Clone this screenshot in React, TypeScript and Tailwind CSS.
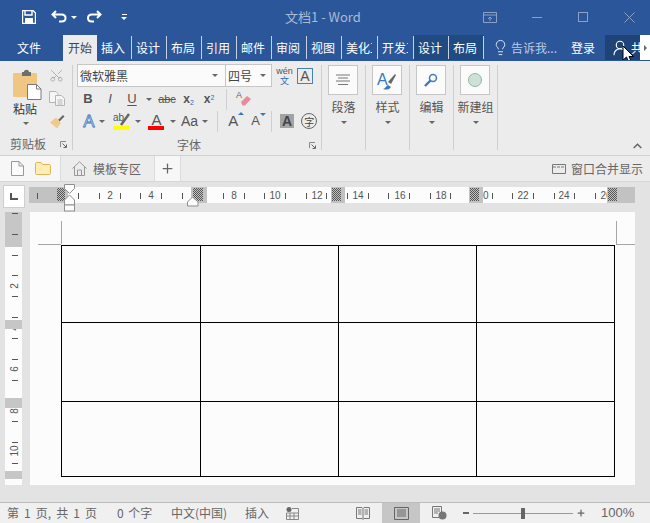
import { Scissors, Lightbulb, UserRound, Plus } from 'lucide-react'

const cjk = { fontFamily: '"Noto Sans CJK SC", "Liberation Sans", sans-serif' }

function Caret({ className = '' }: { className?: string }) {
  return <div className={`w-0 h-0 border-x-[3px] border-t-[3px] border-x-transparent border-t-[#666] ${className}`} />
}

function Launcher() {
  return (
    <svg width="7" height="7" viewBox="0 0 7 7">
      <path d="M0.5 6V0.5H6" fill="none" stroke="#888" />
      <path d="M2.5 2.5L6 6M6.5 3.5V6.5H3.5" fill="none" stroke="#666" />
    </svg>
  )
}

function Tab({ label, dark, wide }: { label: string; dark?: boolean; wide?: boolean }) {
  return (
    <div className={`h-[25px] flex items-center ${dark ? 'bg-[#1f4a82]' : ''}`}>
      <div className={`${wide ? 'w-[36px]' : 'w-[35px]'} h-[23px] border-r border-[#c5d2e6] pl-[4px] leading-[23px]`}>
        <div className="w-[26px] overflow-hidden whitespace-nowrap">{label}</div>
      </div>
    </div>
  )
}

function TitleBar() {
  return (
    <div className="h-[34px] flex items-center text-white relative">
      <svg className="ml-[22px]" width="14" height="14" viewBox="0 0 14 14">
        <path d="M0.5 0.5H11L13.5 3V13.5H0.5Z" fill="none" stroke="#fff" strokeWidth="1.4" />
        <path d="M3 1V5H10V1" fill="none" stroke="#fff" strokeWidth="1.4" />
        <rect x="3" y="8" width="8" height="5.5" fill="#fff" />
      </svg>
      <svg className="ml-[15px]" width="16" height="14" viewBox="0 0 16 14">
        <path d="M5 1L1.5 4.5L5 8M2 4.5H10.5C13 4.5 14.5 6 14.5 8C14.5 10 13 11.5 10.5 11.5H8" fill="none" stroke="#fff" strokeWidth="2" />
      </svg>
      <Caret className="ml-[4px] border-t-white" />
      <svg className="ml-[10px]" width="15" height="14" viewBox="0 0 15 14">
        <path d="M10 1L13.5 4.5L10 8M13 4.5H5C2.5 4.5 1 6 1 8C1 10 2.5 11.5 5 11.5H7" fill="none" stroke="#fff" strokeWidth="2" />
      </svg>
      <div className="ml-[19px] flex flex-col items-center gap-[2px]">
        <div className="w-[5px] h-px bg-white" />
        <Caret className="border-t-white" />
      </div>
      <div className="ml-[158px] text-[13px] text-[#a8bad6] whitespace-nowrap" style={cjk}>文档1 - Word</div>
      <svg className="ml-[122px]" width="14" height="11" viewBox="0 0 14 11">
        <path d="M0.5 0.5H13.5V10.5H0.5ZM0.5 3H13.5M7 9V5M5 7L7 5L9 7" fill="none" stroke="#8ba2c6" />
      </svg>
      <div className="ml-[35px] w-[10px] h-px bg-[#8ba2c6]" />
      <div className="ml-[36px] w-[10px] h-[10px] border border-[#8ba2c6]" />
      <svg className="ml-[36px]" width="11" height="11" viewBox="0 0 11 11">
        <path d="M0.5 0.5L10.5 10.5M10.5 0.5L0.5 10.5" stroke="#8ba2c6" />
      </svg>
    </div>
  )
}

function TabBar() {
  return (
    <div className="h-[27px] flex items-start text-[12px] text-white pt-px" style={cjk}>
      <div className="w-[63px] h-[26px] pl-[17px] leading-[25px]">文件</div>
      <div className="w-[34px] h-[26px] bg-[#ececec] text-[#444] text-center leading-[25px]">开始</div>
      <Tab label="插入" />
      <Tab label="设计" />
      <Tab label="布局" />
      <Tab label="引用" />
      <Tab label="邮件" />
      <Tab label="审阅" />
      <Tab label="视图" />
      <Tab label="美化工具" wide />
      <Tab label="开发工具" wide />
      <Tab label="设计" dark />
      <Tab label="布局" dark />
      <Lightbulb className="ml-[8px] mt-[4px] shrink-0" size={17} strokeWidth={1.3} color="#e8edf5" />
      <div className="ml-[2px] w-[52px] text-[#bccbe2] leading-[25px] whitespace-nowrap">告诉我...</div>
      <div className="ml-[8px] w-[32px] leading-[25px]">登录</div>
      <div className="ml-[2px] w-[35px] h-[25px] bg-[#1e4376] flex items-center pl-[6px] overflow-hidden relative whitespace-nowrap">
        <UserRound className="shrink-0" size={18} strokeWidth={1.5} />
        <span className="ml-[2px]">共享</span>
        <svg className="absolute left-[17px] top-[10px]" width="14" height="20" viewBox="0 0 14 20">
          <path d="M1 1V15L4.5 12L7 18L9.5 17L7 11.5H11.5Z" fill="#fff" stroke="#000" />
        </svg>
      </div>
      <div className="w-[10px] h-[25px] bg-white flex items-center justify-center">
        <div className="w-0 h-0 border-y-[3px] border-l-[3px] border-y-transparent border-l-[#666]" />
      </div>
    </div>
  )
}

function Sep() {
  return <div className="w-px h-[85px] mt-[4px] bg-[#cfcfcf] shrink-0" />
}

function ClipboardGroup() {
  return (
    <div className="w-[72px] shrink-0 flex flex-col">
      <div className="h-[75px] flex">
        <div className="w-[49px] pl-[13px] pt-[8px]">
          <svg width="29" height="31" viewBox="0 0 29 31">
            <rect x="0" y="4" width="24" height="24" rx="1" fill="#efc783" />
            <path d="M9 3H11C11 0 16 0 16 3H18V7H9Z" fill="#6e6e6e" />
            <path d="M14.5 15.5H23.5L28 20V30.5H14.5Z" fill="#fff" stroke="#7a7a7a" />
            <path d="M23.5 15.5V20H28" fill="none" stroke="#7a7a7a" />
          </svg>
          <div className="text-[12px] leading-[16px] text-[#333] mt-[1px]" style={cjk}>粘贴</div>
          <Caret className="ml-[10px] mt-[5px]" />
        </div>
        <div className="pt-[7px] flex flex-col">
          <Scissors size={15} strokeWidth={1.4} color="#a9a9a9" className="-rotate-90" />
          <svg className="mt-[8px]" width="16" height="15" viewBox="0 0 16 15">
            <path d="M0.5 0.5H7L9 2.5V11.5H0.5Z" fill="#f5f5f5" stroke="#b5b5b5" />
            <path d="M6.5 4.5H12.5L15.5 7.5V14.5H6.5Z" fill="#f5f5f5" stroke="#b5b5b5" />
            <path d="M8.5 9H13.5M8.5 11H13.5M8.5 13H13.5" stroke="#b5b5b5" />
          </svg>
          <svg className="mt-[8px]" width="16" height="15" viewBox="0 0 16 15">
            <path d="M9 6L14 1L15.5 2.5L10.5 7.5Z" fill="#666" />
            <path d="M7 3.5L12 9L8 14.5L1 8.5Z" fill="#eecb8d" />
          </svg>
        </div>
      </div>
      <div className="h-[16px] flex items-center justify-between pl-[10px] pr-[5px] text-[12px] text-[#666]" style={cjk}>
        <span>剪贴板</span>
        <Launcher />
      </div>
    </div>
  )
}

function FontGroup() {
  return (
    <div className="w-[248px] shrink-0 pl-[4px] flex flex-col">
      <div className="mt-[3px] h-[23px] flex items-center">
        <div className="w-[195px] h-[23px] border border-[#c6c6c6] bg-[#fbfbfb] flex text-[12px] text-[#444]" style={cjk}>
          <div className="w-[148px] border-r border-[#c6c6c6] flex items-center justify-between pl-[2px] pr-[7px]">
            <span>微软雅黑</span>
            <Caret />
          </div>
          <div className="flex-1 flex items-center justify-between pl-[2px] pr-[5px]">
            <span>四号</span>
            <Caret />
          </div>
        </div>
        <div className="ml-[4px] w-[17px] flex flex-col items-center text-[#555]" style={cjk}>
          <span className="text-[9px] leading-[9px]" style={{ fontFamily: '"Liberation Sans", sans-serif' }}>wén</span>
          <span className="text-[#2f6cb4] text-[9px] leading-[9px]">文</span>
        </div>
        <div className="ml-[4px] w-[16px] h-[16px] border border-[#4a7fb8] flex items-center justify-center text-[14px] leading-none text-[#555] font-['Liberation_Sans',sans-serif]">A</div>
      </div>
      <div className="h-[24px] flex items-center text-[#555] font-['Liberation_Sans',sans-serif]">
        <div className="w-[22px] text-center font-bold text-[13px]">B</div>
        <div className="w-[22px] text-center italic text-[13px]">I</div>
        <div className="w-[22px] text-center text-[13px] underline underline-offset-2">U</div>
        <div className="w-[12px] flex justify-center"><Caret /></div>
        <div className="w-[24px] text-center text-[11px] line-through">abc</div>
        <div className="w-[19px] text-center font-bold text-[12px]">x<sub className="text-[7px] font-normal text-[#2f6cb4]">2</sub></div>
        <div className="w-[22px] text-center font-bold text-[12px]">x<sup className="text-[7px] font-normal text-[#2f6cb4]">2</sup></div>
        <div className="ml-[6px] w-px h-[21px] bg-[#cfcfcf]" />
        <svg className="ml-[9px]" width="16" height="18" viewBox="0 0 16 18">
          <text x="0" y="8" className="fill-[#666] text-[9px]" style={{ fontFamily: '"Liberation Sans", sans-serif' }}>A</text>
          <path d="M5 12L11 6L15 9L9 15.5H6.5Z" fill="#ea8a9a" />
        </svg>
      </div>
      <div className="h-[20px] flex items-center text-[#555] font-['Liberation_Sans',sans-serif]">
        <svg className="ml-[4px]" width="16" height="16" viewBox="0 0 16 16">
          <text x="8" y="14" textAnchor="middle" className="fill-white stroke-[#3b78bd] text-[17px]" strokeWidth="0.8" style={{ fontFamily: '"Liberation Sans", sans-serif' }}>A</text>
        </svg>
        <Caret className="ml-[2px]" />
        <div className="ml-[8px] w-[17px] h-[17px] relative overflow-hidden">
          <span className="absolute left-0 top-[-3px] text-[10px]">ab</span>
          <svg className="absolute left-[6px] top-0" width="11" height="13" viewBox="0 0 11 13">
            <path d="M2 12L10 1" stroke="#666" strokeWidth="2.5" />
          </svg>
          <div className="absolute left-0 bottom-0 w-[16px] h-[4px] bg-[#ffff00]" />
        </div>
        <Caret className="ml-[5px]" />
        <div className="ml-[7px] w-[17px] h-[17px] relative">
          <span className="absolute inset-x-0 top-[-2px] text-center text-[15px] leading-[17px]">A</span>
          <div className="absolute left-0 bottom-0 w-[16px] h-[4px] bg-[#ff0000]" />
        </div>
        <Caret className="ml-[5px]" />
        <div className="ml-[5px] text-[14px]">Aa</div>
        <Caret className="ml-[4px]" />
        <div className="ml-[9px] w-px h-[21px] bg-[#cfcfcf]" />
        <div className="ml-[10px] w-[16px] text-[15px] relative">
          A
          <div className="absolute right-0 top-[2px] w-0 h-0 border-x-[3px] border-b-[3px] border-x-transparent border-b-[#3b78bd]" />
        </div>
        <div className="ml-[7px] w-[14px] text-[13px] relative">
          A
          <div className="absolute right-[-1px] top-[2px] w-0 h-0 border-x-[3px] border-t-[3px] border-x-transparent border-t-[#3b78bd]" />
        </div>
        <div className="ml-[6px] w-px h-[21px] bg-[#cfcfcf]" />
        <div className="ml-[8px] w-[14px] h-[14px] bg-[#a3a3a3] flex items-center justify-center text-[14px] font-bold text-[#444]">A</div>
        <div className="ml-[7px] w-[16px] h-[16px] rounded-full border border-[#666] flex items-center justify-center text-[10px] text-[#444]" style={cjk}>字</div>
      </div>
      <div className="mt-[6px] h-[16px] flex items-center text-[12px] text-[#666]" style={cjk}>
        <span className="ml-[100px]">字体</span>
        <div className="ml-[108px]"><Launcher /></div>
      </div>
    </div>
  )
}

function BigButton({ label, wide, children }: { label: string; wide?: boolean; children: React.ReactNode }) {
  return (
    <div className="w-[43px] shrink-0 pt-[4px] flex flex-col items-center text-[12px] text-[#555]" style={cjk}>
      <div className="self-start ml-[6px] w-[30px] h-[30px] border border-[#c6c6c6] bg-[#fbfbfb] flex items-center justify-center">{children}</div>
      <div className={`mt-[4px] leading-[16px] whitespace-nowrap ${wide ? '-mx-2' : ''}`}>{label}</div>
      <Caret className="mt-[6px]" />
    </div>
  )
}

function Ribbon() {
  return (
    <div className="h-[95px] bg-[#ececec] border-b border-[#d2d2d2] flex">
      <ClipboardGroup />
      <Sep />
      <FontGroup />
      <Sep />
      <BigButton label="段落">
        <svg width="16" height="12" viewBox="0 0 16 12">
          <path d="M1 1H15M3 4H13M1 7H15M3 10.5H13" stroke="#777" />
        </svg>
      </BigButton>
      <Sep />
      <BigButton label="样式">
        <svg width="20" height="21" viewBox="0 0 20 21">
          <text x="0" y="15" className="fill-[#3b78bd] text-[16px]" style={{ fontFamily: '"Liberation Sans", sans-serif' }}>A</text>
          <path d="M11 12L18 4L19 5L14 14Z" fill="#666" />
          <path d="M6 19C8 19 9 16 11 15L14 17C12 20 9 20 6 19Z" fill="#3b78bd" />
        </svg>
      </BigButton>
      <Sep />
      <BigButton label="编辑">
        <svg width="14" height="14" viewBox="0 0 14 14">
          <circle cx="9" cy="5" r="3.5" fill="none" stroke="#4a7fb8" strokeWidth="1.6" />
          <path d="M6.5 7.5L1 13" stroke="#3b78bd" strokeWidth="2.4" />
        </svg>
      </BigButton>
      <Sep />
      <BigButton label="新建组" wide>
        <div className="w-[14px] h-[14px] rounded-full bg-[#cfe0d6] border border-[#8cb8a4]" />
      </BigButton>
      <Sep />
      <div className="flex-1 flex items-end justify-end pr-[8px] pb-[6px]">
        <svg width="9" height="6" viewBox="0 0 9 6">
          <path d="M0.7 5L4.5 1.2L8.3 5" fill="none" stroke="#666" strokeWidth="1.5" />
        </svg>
      </div>
    </div>
  )
}

function DocTabs() {
  return (
    <div className="h-[26px] bg-[#ececec] border-b border-[#d6d6d6] flex text-[12px] text-[#666]" style={cjk}>
      <div className="w-[60px] bg-[#f7f7f7] flex items-center pl-[11px] gap-[11px]">
        <svg width="13" height="15" viewBox="0 0 13 15">
          <path d="M0.5 0.5H8L12.5 5V14.5H0.5ZM8 0.5V5H12.5" fill="#fbfbfb" stroke="#999" />
        </svg>
        <svg width="16" height="13" viewBox="0 0 16 13">
          <path d="M0.5 1.5C0.5 1 1 0.5 1.5 0.5H6L7.5 2.5H14.5C15 2.5 15.5 3 15.5 3.5V11.5C15.5 12 15 12.5 14.5 12.5H1.5C1 12.5 0.5 12 0.5 11.5Z" fill="#fdeeb5" stroke="#e3b456" />
        </svg>
      </div>
      <div className="w-[94px] border-l border-[#dcdcdc] flex items-center pl-[11px] gap-[6px]">
        <svg width="15" height="15" viewBox="0 0 15 15">
          <path d="M0.5 7.5L7.5 0.8L14.5 7.5M2.5 6V14.5H12.5V6M5.5 14.5V9H9.5V14.5" fill="none" stroke="#999" />
        </svg>
        <span className="text-[12px]">模板专区</span>
      </div>
      <div className="w-[27px] bg-[#f7f7f7] border-x border-[#dcdcdc] flex items-center justify-center">
        <Plus size={15} strokeWidth={2} color="#666" />
      </div>
      <div className="flex-1 flex items-center justify-end pr-[7px] gap-[5px]">
        <svg width="14" height="10" viewBox="0 0 14 10">
          <path d="M0.5 0.5H13.5V9.5H0.5Z" fill="none" stroke="#777" />
          <path d="M1 3H13" stroke="#777" strokeDasharray="3 1" />
        </svg>
        <span>窗口合并显示</span>
      </div>
    </div>
  )
}

const ticks = Array.from({ length: 28 }, (_, i) => 37 + i * 20.67)
const labels = [
  [110, '2'], [151, '4'], [234, '8'], [275, '10'], [317, '12'], [358, '14'],
  [400, '16'], [441, '18'], [483, '20'], [523, '22'], [564, '24'], [606, '26'],
] as const
const greys = [[29, 39], [191, 16], [331, 14], [469, 14], [607, 28]]
const hatches = [[57, 8], [193, 10], [332, 9], [470, 9], [608, 9]]

function Ruler() {
  return (
    <svg className="ml-[4px] shrink-0" width="606" height="30" viewBox="29 182 606 30">
      <defs>
        <pattern id="hatch" width="2" height="2" patternUnits="userSpaceOnUse">
          <rect width="2" height="2" fill="#c2c2c2" />
          <rect width="1" height="1" fill="#555" />
          <rect x="1" y="1" width="1" height="1" fill="#555" />
        </pattern>
      </defs>
      <rect x="29" y="187" width="606" height="16" fill="#fcfcfc" />
      {ticks.map(x => <rect key={x} x={Math.round(x)} y="193" width="1" height="6" fill="#555" />)}
      {labels.map(([x, t]) => (
        <text key={t} x={x} y="199" textAnchor="middle" className="fill-[#555] text-[10px]" style={{ fontFamily: '"Liberation Sans", sans-serif' }}>{t}</text>
      ))}
      {greys.map(([x, w]) => <rect key={x} x={x} y="187" width={w} height="16" fill="#c2c2c2" />)}
      <rect x="37" y="193" width="1" height="6" fill="#555" />
      {hatches.map(([x, w]) => <rect key={x} x={x} y="188" width={w} height="13" fill="url(#hatch)" />)}
      <path d="M64.5 184.5H74.5V188.5L69.5 193.5L64.5 188.5ZM69.5 195L74.5 200V205H64.5V200Z" fill="#fcfcfc" stroke="#8f8f8f" />
      <rect x="64.5" y="205" width="10" height="6" fill="#fcfcfc" stroke="#8f8f8f" />
      <path d="M192.5 197L198 202V206H187.5V202Z" fill="#fcfcfc" stroke="#8f8f8f" />
    </svg>
  )
}

const vTicks = Array.from({ length: 13 }, (_, i) => 213 + i * 20.83)
const vLabels = [[286, '2'], [328, '4'], [369, '6'], [411, '8'], [451, '10']] as const
const vGreys = [[212, 35], [320, 9], [398, 10], [471, 8]]

function VerticalRuler() {
  return (
    <svg className="shrink-0" width="17" height="273" viewBox="5 212 17 273">
      <rect x="5" y="212" width="17" height="273" fill="#fcfcfc" />
      {vTicks.map(y => <rect key={y} x="12" y={Math.round(y)} width="6" height="1" fill="#555" />)}
      {vLabels.map(([y, t]) => (
        <text key={t} x="14.5" y={y} textAnchor="middle" dominantBaseline="central" transform={`rotate(-90 14.5 ${y})`} className="fill-[#555] text-[10px]" style={{ fontFamily: '"Liberation Sans", sans-serif' }}>{t}</text>
      ))}
      {vGreys.map(([y, h]) => <rect key={y} x="5" y={y} width="17" height={h} fill="#c6c6c6" />)}
      <rect x="12" y="213" width="6" height="1" fill="#555" />
      <rect x="12" y="234" width="6" height="1" fill="#555" />
    </svg>
  )
}

function Page() {
  const cells = Array.from({ length: 12 })
  return (
    <div className="ml-[8px] w-[605px] h-[273px] bg-[#fcfcfc] pt-[33px] pl-[31px] relative">
      <div className="absolute left-[31px] top-[9px] w-px h-[23px] bg-[#a6a6a6]" />
      <div className="absolute left-[8px] top-[32px] w-[23px] h-px bg-[#a6a6a6]" />
      <div className="absolute left-[586px] top-[9px] w-px h-[23px] bg-[#a6a6a6]" />
      <div className="absolute left-[586px] top-[32px] w-[19px] h-px bg-[#a6a6a6]" />
      <div className="w-[554px] grid grid-cols-[139px_138px_138px_138px] grid-rows-[77px_79px_75px] border-l border-t border-black">
        {cells.map((_, i) => <div key={i} className="border-r border-b border-black" />)}
      </div>
    </div>
  )
}

function StatusBar() {
  return (
    <div className="h-[21px] bg-[#f0f0f0] border-t border-[#bdbdbd] flex items-center text-[12px] text-[#666]" style={cjk}>
      <span className="ml-[7px] w-[110px] whitespace-pre [word-spacing:2.4px]">第 1 页, 共 1 页</span>
      <span className="w-[54px] whitespace-pre [word-spacing:2px]">0 个字</span>
      <span className="w-[74px]">中文(中国)</span>
      <span className="w-[41px]">插入</span>
      <svg width="13" height="13" viewBox="0 0 13 13">
        <circle cx="3" cy="2.5" r="2.5" fill="#666" />
        <path d="M6 1.5H12.5V12.5H0.5V6H12.5M0.5 9H12.5M4 6V12.5M8 6V12.5" fill="none" stroke="#888" />
      </svg>
      <svg className="ml-[57px]" width="14" height="14" viewBox="0 0 14 14">
        <path d="M0.5 1.5H6L7 2.5L8 1.5H13.5V12.5H8L7 13.5L6 12.5H0.5ZM7 2.5V13M2 4H5.5M2 6H5.5M2 8H5.5M8.5 4H12M8.5 6H12M8.5 8H12" fill="none" stroke="#777" />
      </svg>
      <div className="ml-[12px] w-[38px] h-[20px] bg-[#c6c6c6] flex items-center justify-center">
        <svg width="15" height="13" viewBox="0 0 15 13">
          <path d="M0.5 0.5H14.5V12.5H0.5ZM3 3H12M3 5H12M3 7H12M3 9H12" fill="none" stroke="#666" />
        </svg>
      </div>
      <svg className="ml-[12px]" width="15" height="14" viewBox="0 0 15 14">
        <path d="M0.5 0.5H9.5V11.5H0.5ZM2 3H8M2 5H8M2 7H6" fill="none" stroke="#777" />
        <circle cx="10.5" cy="9.5" r="4" fill="#777" />
      </svg>
      <div className="ml-[16px] w-[6px] h-[2px] bg-[#666]" />
      <div className="ml-[4px] w-[100px] h-px bg-[#999] relative">
        <div className="absolute left-[48px] top-[-5px] w-[4px] h-[11px] bg-[#666]" />
      </div>
      <Plus className="ml-[3px]" size={10} strokeWidth={3} color="#666" />
      <span className="ml-[15px] text-[13px] font-['Liberation_Sans',sans-serif]">100%</span>
    </div>
  )
}

export default function App() {
  return (
    <div className="w-[650px] h-[523px] overflow-hidden flex flex-col bg-[#e3e3e3]">
      <div className="bg-[#2b579a]">
        <TitleBar />
        <TabBar />
      </div>
      <Ribbon />
      <DocTabs />
      <div className="h-[30px] flex pt-[3px] pl-[3px] relative">
        <div className="w-[22px] h-[23px] bg-white border border-[#cfcfcf] flex items-center justify-center">
          <div className="w-[8px] h-[7px] border-l-2 border-b-2 border-[#555]" />
        </div>
        <div className="absolute left-[25px] top-0"><Ruler /></div>
      </div>
      <div className="flex-1 flex pl-[5px]">
        <VerticalRuler />
        <Page />
      </div>
      <StatusBar />
    </div>
  )
}
